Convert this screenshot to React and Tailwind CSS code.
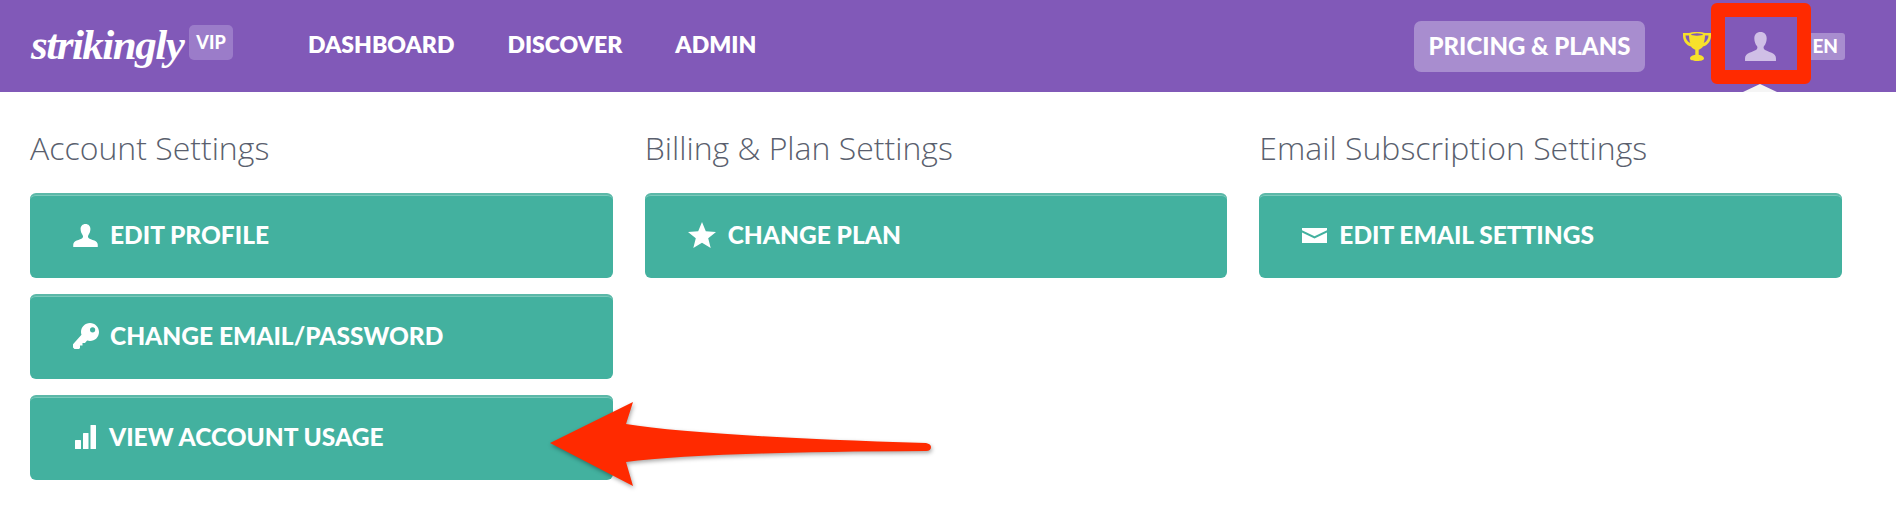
import React from 'react';

const PersonIcon = ({ className }) => (
  <svg viewBox="0 0 32 30" className={className} fill="currentColor">
    <path d="M16 0c-4 0-6.400 2.800-6.400 6.600 0 3.200 1.200 6 2.700 8 .7 1 .7 2.600-.3 3.500-1.300 1.200-4.500 2.100-7.500 3.400C1.700 22.800 0 24.600 0 27.200V30h32v-2.800c0-2.600-1.700-4.400-4.500-5.700-3-1.300-6.200-2.200-7.500-3.400-1-.9-1-2.500-.3-3.500 1.500-2 2.700-4.800 2.700-8C22.400 2.800 20 0 16 0z" />
  </svg>
);

const KeyIcon = ({ className }) => (
  <svg viewBox="0 0 26 26" className={className} fill="currentColor">
    <path fillRule="evenodd" d="M17 0c5 0 9 4 9 9s-4 9-9 9c-1 0-2-.2-2.900-.5L12 20h-2.500v2.500H7V25l-1 1H1.500L0 24.500v-3.300L8.500 11.700C8.200 10.900 8 10 8 9c0-5 4-9 9-9zm2.600 4.200a2.600 2.600 0 1 0 0 5.200 2.600 2.600 0 0 0 0-5.200z" />
  </svg>
);

const BarsIcon = ({ className }) => (
  <svg viewBox="0 0 21 24" className={className} fill="currentColor">
    <rect x="0" y="15" width="6" height="9" rx="0.5" />
    <rect x="8" y="8" width="5.500" height="16" rx="0.5" />
    <rect x="15.500" y="0" width="5.500" height="24" rx="0.5" />
  </svg>
);

const StarIcon = ({ className }) => (
  <svg viewBox="0 0 28 26" className={className} fill="currentColor">
    <path d="M14 0l3.800 9.200 10.200.7-7.800 6.400 2.500 9.700L14 20.700l-8.700 5.300 2.500-9.700L0 9.900l10.200-.7z" />
  </svg>
);

const MailIcon = ({ className }) => (
  <svg viewBox="0 0 25 15" className={className} fill="currentColor">
    <path d="M0 0h25v2.300l-12.500 6-12.500-6z" />
    <path d="M0 4.600l12.500 6 12.500-6V15H0z" />
  </svg>
);

const TrophyIcon = ({ className }) => (
  <svg viewBox="0 0 28 30" className={className}>
    <path
      fill="#f7e02b"
      fillRule="evenodd"
      d="M6 2c2-1.500 14-1.500 16 0h6v3c0 5-3.500 9.500-8 10.500-1.200 1.700-2.800 2.700-4.300 3.200v5c2.500.4 5.300 1.600 5.300 3.800 0 1.600-2.500 2.500-7 2.500s-7-.9-7-2.500c0-2.200 2.800-3.400 5.300-3.800v-5c-1.500-.5-3.100-1.500-4.300-3.200C3.500 14.500 0 10 0 5V2zM2.500 4.500c0 3 1.700 6 4.800 7.600C6.500 10 6.100 7.300 6 4.500zm23 0H22c-.1 2.800-.5 5.500-1.300 7.600 3.100-1.600 4.800-4.600 4.800-7.600z"
    />
    <ellipse cx="14" cy="3.500" rx="6" ry="1.200" fill="#8159b8" />
  </svg>
);

const sections = [
  {
    title: 'Account Settings',
    buttons: [
      { label: 'EDIT PROFILE', icon: <PersonIcon className="h-[23px] w-[25px]" /> },
      { label: 'CHANGE EMAIL/PASSWORD', icon: <KeyIcon className="mr-[-1px] h-[26px] w-[26px]" /> },
      { label: 'VIEW ACCOUNT USAGE', icon: <BarsIcon className="ml-[2px] mr-[1px] h-[24px] w-[21px]" /> },
    ],
  },
  {
    title: 'Billing & Plan Settings',
    buttons: [{ label: 'CHANGE PLAN', icon: <StarIcon className="h-[26px] w-[28px]" /> }],
  },
  {
    title: 'Email Subscription Settings',
    buttons: [{ label: 'EDIT EMAIL SETTINGS', icon: <MailIcon className="h-[15px] w-[25px]" /> }],
  },
];

const ActionButton = ({ label, icon }) => (
  <a className="flex h-[85px] items-center gap-[12px] rounded-[6px] border-t-2 border-[#5cb8a8] bg-[#43b19f] pb-[3px] pl-[43px] pr-4 shadow-[inset_0_1px_0_#7cc9bb] text-white font-['Lato',sans-serif] font-black text-[24.500px] leading-none">
    {icon}
    <span>{label}</span>
  </a>
);

export default function App() {
  return (
    <div className="relative h-[514px] w-[1896px] overflow-hidden bg-white">
      <header className="flex h-[92px] items-center bg-[#8159b8] pl-[31px] text-white">
        <span className="w-[148px] pb-[3px] font-['Liberation_Serif',serif] text-[43px] font-bold italic leading-none tracking-[-1.500px]">
          strikingly
        </span>
        <span className="ml-[10px] mb-[7px] flex h-[35px] w-[44px] items-center justify-center rounded-[5px] bg-[#9b7cc9] font-['Lato',sans-serif] text-[18px] font-black">
          VIP
        </span>
        <nav className="ml-[75px] flex gap-[53px] pb-[3px] font-['Lato',sans-serif] text-[23px] font-extrabold leading-none">
          <a>DASHBOARD</a>
          <a>DISCOVER</a>
          <a>ADMIN</a>
        </nav>
        <div className="ml-auto flex items-center pr-[51px]">
          <a className="flex h-[51px] w-[231px] items-center justify-center rounded-[7px] bg-[#a88dcf] pb-[1px] font-['Lato',sans-serif] text-[24px] font-black">
            PRICING &amp; PLANS
          </a>
          <TrophyIcon className="ml-[38px] h-[30px] w-[28px]" />
          <PersonIcon className="ml-[34px] h-[29px] w-[31px] text-[#d0bfe6]" />
          <span className="ml-[29px] flex h-[27px] w-[40px] items-center justify-end rounded-[3px] bg-[#a88dcf] pr-[7px] font-['Lato',sans-serif] text-[19px] font-black">
            EN
          </span>
        </div>
      </header>

      <main className="grid grid-cols-3 gap-[32px] pl-[30px] pr-[54px]">
        {sections.map((section) => (
          <section key={section.title}>
            <h2 className="flex h-[101px] items-start pt-[36px] font-['Open_Sans',sans-serif] text-[32px] font-light leading-[40px] text-[#5a5f6e]">
              {section.title}
            </h2>
            <div className="flex flex-col gap-[16px]">
              {section.buttons.map((button) => (
                <ActionButton key={button.label} {...button} />
              ))}
            </div>
          </section>
        ))}
      </main>

      {/* caret under the account icon */}
      <div className="absolute left-[1743px] top-[84px] h-0 w-0 border-x-[17px] border-b-[8px] border-x-transparent border-b-[#f5f5f5]" />

      {/* annotation: highlight box */}
      <div className="absolute left-[1711px] top-[3px] h-[81px] w-[100px] rounded-[6px] border-[14px] border-[#ff2a00]" />

      {/* annotation: arrow */}
      <svg
        className="absolute left-[540px] top-[395px] h-[100px] w-[400px] drop-shadow-[1px_2px_2px_rgba(0,0,0,0.35)]"
        viewBox="540 395 400 100"
      >
        <path
          fill="#ff2a00"
          d="M550 443L633 402L626 424Q700 436 926 443Q931 444 931 447Q931 451 926 451Q700 452 626 462L633 486Z"
        />
      </svg>
    </div>
  );
}
